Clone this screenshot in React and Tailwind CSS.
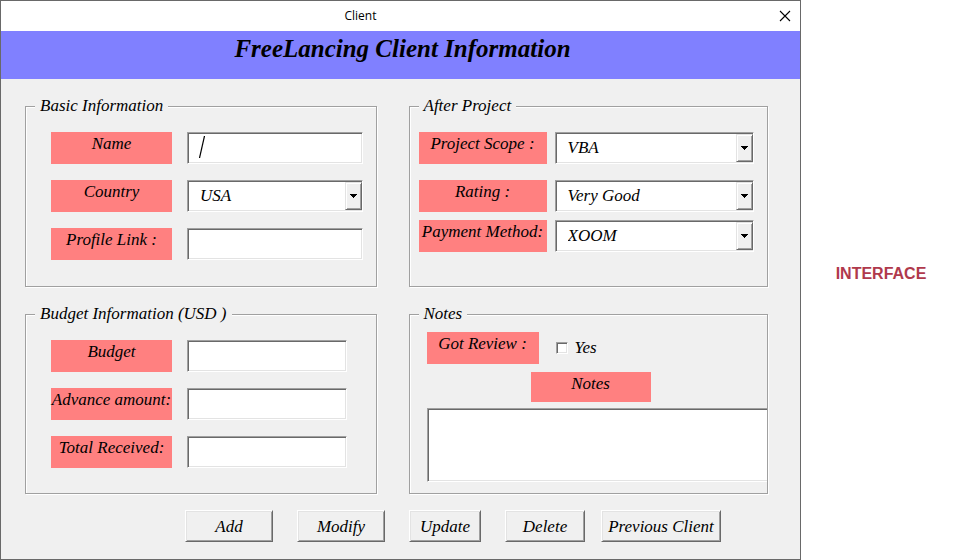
import React from "react";

const labelBase =
  "block shrink-0 bg-[#ff8080] text-center text-[17px] leading-6 whitespace-nowrap";

const sunken =
  "rounded-none border border-t-[#a0a0a0] border-l-[#a0a0a0] border-r-white border-b-white bg-white shadow-[inset_1px_1px_0_#696969,inset_-1px_-1px_0_#e3e3e3] outline-none";

function Frame({ title, className, children }) {
  return (
    <fieldset className="min-w-0 border border-[#a0a0a0] shadow-[inset_1px_1px_0_#fff,1px_1px_0_#fff]">
      <legend className="ml-[9px] bg-[#f0f0f0] px-[5px] text-[17px] leading-6">{title}</legend>
      <div className={`flex flex-col ${className}`}>{children}</div>
    </fieldset>
  );
}

function TextRow({ id, label, caret }) {
  return (
    <div className="flex gap-[15px]">
      <label htmlFor={id} className={`${labelBase} h-8 w-[121px]`}>
        {label}
      </label>
      <div className="relative min-w-0 flex-1">
        <input id={id} type="text" className={`${sunken} block h-8 w-full px-3 text-[17px]`} />
        {caret && (
          <svg
            className="pointer-events-none absolute top-1 left-3"
            width="6"
            height="22"
            viewBox="0 0 6 22"
            aria-hidden="true"
          >
            <path d="M0.5 22 L5.5 0" stroke="#000" strokeWidth="1.2" />
          </svg>
        )}
      </div>
    </div>
  );
}

function Combo({ id, options }) {
  return (
    <div className="relative min-w-0 flex-1">
      <select
        id={id}
        className={`${sunken} block h-8 w-full appearance-none pr-6 pl-3 text-[17px] leading-6 italic`}
      >
        {options.map((option) => (
          <option key={option}>{option}</option>
        ))}
      </select>
      <span className="pointer-events-none absolute top-[2px] right-[1px] bottom-[2px] flex w-[17px] items-center justify-center border border-t-[#e3e3e3] border-r-[#696969] border-b-[#696969] border-l-[#e3e3e3] bg-[#f0f0f0] shadow-[inset_1px_1px_0_#fff,inset_-1px_-1px_0_#a0a0a0]">
        <svg width="7" height="4" viewBox="0 0 7 4" shapeRendering="crispEdges" aria-hidden="true">
          <path d="M0 0H7V1H6V2H5V3H4V4H3V3H2V2H1V1H0Z" fill="#000" />
        </svg>
      </span>
    </div>
  );
}

function ComboRow({ id, label, options }) {
  return (
    <div className="flex gap-2">
      <label htmlFor={id} className={`${labelBase} h-8 w-32`}>
        {label}
      </label>
      <Combo id={id} options={options} />
    </div>
  );
}

function CommandButton({ className, children }) {
  return (
    <button
      type="button"
      className={`h-8 border border-t-white border-r-[#696969] border-b-[#696969] border-l-white bg-[#f0f0f0] pt-[2px] text-center text-[17px] leading-6 whitespace-nowrap italic shadow-[inset_1px_1px_0_#e3e3e3,inset_-1px_-1px_0_#a0a0a0] ${className}`}
    >
      {children}
    </button>
  );
}

export default function App() {
  return (
    <div className="grid min-h-screen grid-cols-[minmax(0,1fr)_169px] bg-white">
      <main className="flex flex-col border border-[#696969] bg-[#f0f0f0] font-['Monotype_Corsiva','Liberation_Serif',serif] text-black italic">
        <header className="flex h-[30px] items-center bg-white not-italic">
          <span className="flex-1 text-center font-['Segoe_UI','Open_Sans',sans-serif] text-[12px] leading-4">
            Client
          </span>
          <div className="flex w-20 justify-end pr-[9px]">
            <button type="button" aria-label="Close" className="block">
              <svg width="12" height="12" viewBox="0 0 12 12" aria-hidden="true">
                <path d="M1 1L11 11M11 1L1 11" stroke="#000" strokeWidth="1.1" />
              </svg>
            </button>
          </div>
        </header>
        <h1 className="h-12 bg-[#8080ff] pl-1 text-center text-[25px] leading-9 font-bold">
          FreeLancing Client Information
        </h1>

        <form className="flex flex-1 flex-col">
          <div className="grid grid-cols-[352fr_360fr] gap-x-8 gap-y-[15px] pt-[15px] pr-8 pl-6">
            <Frame title="Basic Information" className="gap-4 pt-[14px] pr-[13px] pb-[26px] pl-[25px]">
              <TextRow id="name" label="Name" caret />
              <div className="flex gap-[15px]">
                <label htmlFor="country" className={`${labelBase} h-8 w-[121px]`}>
                  Country
                </label>
                <Combo id="country" options={["USA", "Canada", "UK"]} />
              </div>
              <TextRow id="profile" label="Profile Link :" />
            </Frame>

            <Frame title="After Project" className="gap-2 pt-[14px] pr-[13px] pb-[26px] pl-[9px]">
              <div className="pb-2">
                <ComboRow id="scope" label="Project Scope :" options={["VBA", "Excel"]} />
              </div>
              <ComboRow id="rating" label="Rating :" options={["Very Good", "Good"]} />
              <ComboRow id="payment" label="Payment Method:" options={["XOOM", "PayPal"]} />
            </Frame>

            <Frame
              title="Budget Information (USD )"
              className="gap-4 pt-[14px] pr-[29px] pb-[25px] pl-[25px]"
            >
              <TextRow id="budget" label="Budget" />
              <TextRow id="advance" label="Advance amount:" />
              <TextRow id="received" label="Total Received:" />
            </Frame>

            <Frame title="Notes" className="pt-[6px] pb-[11px] pl-[17px]">
              <div className="flex gap-[17px]">
                <label htmlFor="review" className={`${labelBase} h-8 w-28`}>
                  Got Review :
                </label>
                <div className="flex items-center gap-[7px]">
                  <input
                    id="review"
                    type="checkbox"
                    className={`${sunken} block size-3 appearance-none`}
                  />
                  <label htmlFor="review" className="text-[17px] leading-8">
                    Yes
                  </label>
                </div>
              </div>
              <label htmlFor="notes" className={`${labelBase} mt-2 ml-[104px] h-[30px] w-[120px]`}>
                Notes
              </label>
              <textarea
                id="notes"
                className="mt-[6px] block h-[74px] w-full resize-none border border-r-0 border-t-[#a0a0a0] border-b-white border-l-[#a0a0a0] bg-white px-3 text-[17px] shadow-[inset_1px_1px_0_#696969,inset_0_-1px_0_#e3e3e3] outline-none"
              />
            </Frame>
          </div>

          <div className="flex gap-6 pt-4 pb-[15px] pl-[184px]">
            <CommandButton className="w-[88px]">Add</CommandButton>
            <CommandButton className="w-[88px]">Modify</CommandButton>
            <CommandButton className="w-[72px]">Update</CommandButton>
            <div className="flex gap-4">
              <CommandButton className="w-20">Delete</CommandButton>
              <CommandButton className="w-[120px]">Previous Client</CommandButton>
            </div>
          </div>
        </form>
      </main>

      <aside className="flex justify-center pt-[264px]">
        <p className="pr-[9px] font-['Liberation_Sans',Arial,sans-serif] text-[16px] leading-5 font-bold text-[#b0394c]">
          INTERFACE
        </p>
      </aside>
    </div>
  );
}
